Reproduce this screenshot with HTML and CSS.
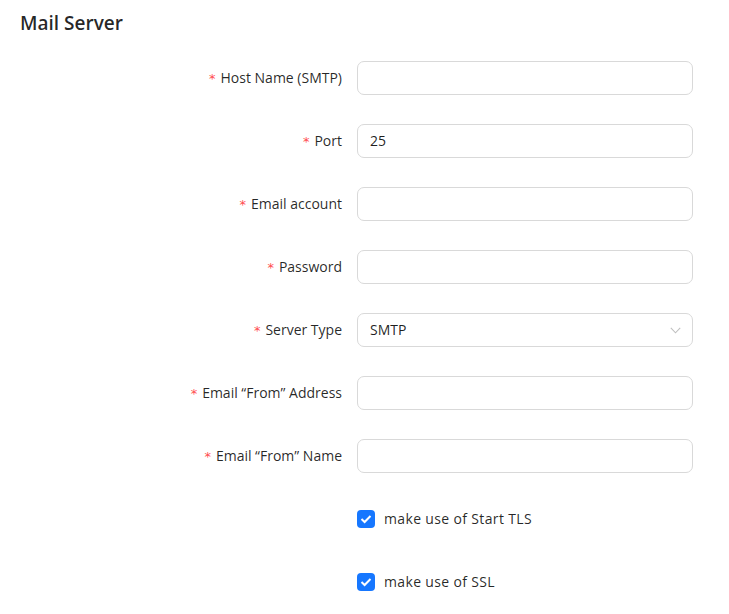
FILE: index.html
```html
<!DOCTYPE html>
<html>
<head>
<meta charset="utf-8">
<link rel="stylesheet" href="styles.css">
</head>
<body>
<div class="page">
  <h2 class="title">Mail Server</h2>
  <form class="form">
    <div class="row">
      <label class="label"><span class="req">*</span>Host Name (SMTP)</label>
      <div class="input"></div>
    </div>
    <div class="row">
      <label class="label"><span class="req">*</span>Port</label>
      <div class="input">25</div>
    </div>
    <div class="row">
      <label class="label"><span class="req">*</span>Email account</label>
      <div class="input"></div>
    </div>
    <div class="row">
      <label class="label"><span class="req">*</span>Password</label>
      <div class="input"></div>
    </div>
    <div class="row">
      <label class="label"><span class="req">*</span>Server Type</label>
      <div class="input select">SMTP
        <svg class="arrow" width="11" height="7" viewBox="0 0 11 7"><path d="M0.8 0.8 L5.5 5.8 L10.2 0.8" fill="none" stroke="#bfbfbf" stroke-width="1.1"/></svg>
      </div>
    </div>
    <div class="row">
      <label class="label"><span class="req">*</span>Email “From” Address</label>
      <div class="input"></div>
    </div>
    <div class="row">
      <label class="label"><span class="req">*</span>Email “From” Name</label>
      <div class="input"></div>
    </div>
    <div class="row">
      <span></span>
      <div class="check"><span class="box"><svg width="12" height="10" viewBox="0 0 12 10"><path d="M1.5 5 L4.6 8 L10.5 2" fill="none" stroke="#fff" stroke-width="2"/></svg></span><span class="ctext">make use of Start TLS</span></div>
    </div>
    <div class="row">
      <span></span>
      <div class="check"><span class="box"><svg width="12" height="10" viewBox="0 0 12 10"><path d="M1.5 5 L4.6 8 L10.5 2" fill="none" stroke="#fff" stroke-width="2"/></svg></span><span class="ctext">make use of SSL</span></div>
    </div>
  </form>
</div>
</body>
</html>
```
FILE: styles.css
```css
html, body {
  margin: 0;
  background: #fff;
}
body {
  font-family: "Open Sans", "Noto Sans", sans-serif;
  font-size: 14px;
  color: rgba(0, 0, 0, 0.85);
}
.page {
  padding: 9px 20px 0 20px;
}
.title {
  margin: 0;
  font-size: 19px;
  font-weight: 600;
  line-height: 28px;
  color: rgba(0, 0, 0, 0.85);
}
.form {
  margin-top: 24px;
  display: flex;
  flex-direction: column;
  gap: 29px;
}
.row {
  display: grid;
  grid-template-columns: 337px 336px;
  align-items: center;
  height: 34px;
}
.label {
  text-align: right;
  padding-right: 15px;
  padding-bottom: 2px;
  white-space: nowrap;
}
.req {
  color: #ff4d4f;
  margin-right: 5px;
  font-family: "DejaVu Sans", sans-serif;
  font-size: 13px;
}
.input {
  box-sizing: border-box;
  height: 34px;
  border: 1px solid #d9d9d9;
  border-radius: 7px;
  padding: 0 12px 2px 12px;
  display: flex;
  align-items: center;
  color: rgba(0, 0, 0, 0.88);
}
.select {
  justify-content: space-between;
}
.arrow {
  margin-right: -1px;
  margin-top: 2px;
}
.check {
  display: flex;
  align-items: center;
  gap: 9px;
}
.ctext {
  letter-spacing: 0.35px;
  padding-bottom: 2px;
}
.box {
  width: 18px;
  height: 18px;
  border-radius: 4px;
  background: #1677ff;
  display: flex;
  align-items: center;
  justify-content: center;
}
```
